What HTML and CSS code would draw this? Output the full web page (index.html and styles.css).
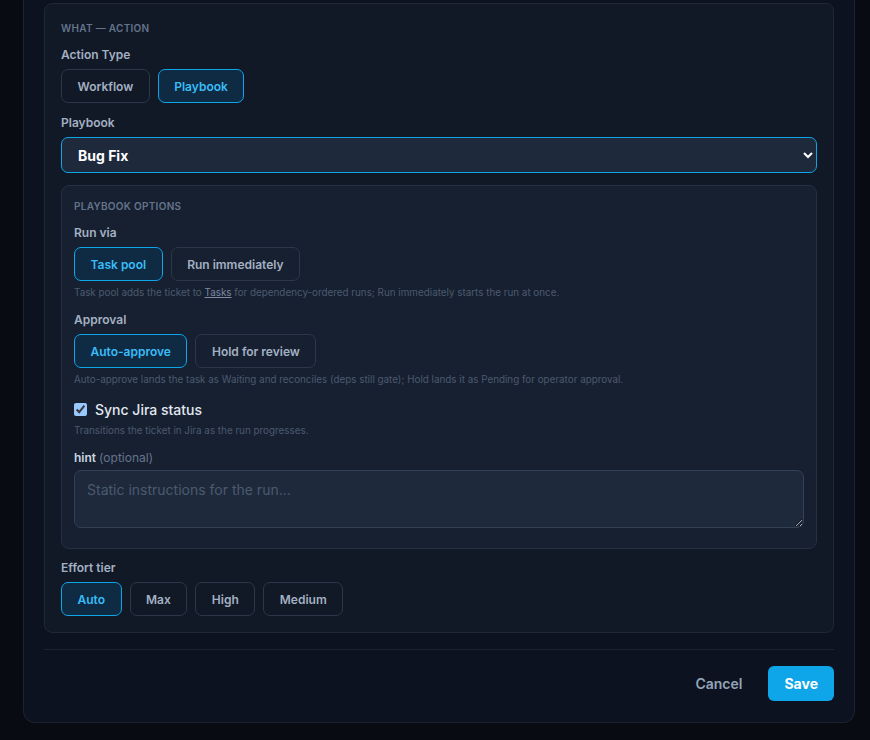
FILE: index.html
```html
<!DOCTYPE html>
<html lang="en">
<head>
    <meta charset="UTF-8">
    <meta name="viewport" content="width=device-width, initial-scale=1.0">
    <title>Edit Rule</title>
    <link rel="stylesheet" href="styles.css">
</head>
<body>
    <div class="modal">
        <div class="modal-body">
            <section class="section">
                <div class="section-title">What — Action</div>

                <div class="field">
                    <div class="field-label">Action Type</div>
                    <div class="seg">
                        <button class="seg-btn">Workflow</button>
                        <button class="seg-btn active">Playbook</button>
                    </div>
                </div>

                <div class="field">
                    <label class="field-label" for="playbook">Playbook</label>
                    <select id="playbook" class="select">
                        <option>Bug Fix</option>
                        <option>Feature</option>
                        <option>Refactor</option>
                    </select>
                </div>

                <div class="subsection">
                    <div class="section-title">Playbook options</div>

                    <div class="field">
                        <div class="field-label">Run via</div>
                        <div class="seg">
                            <button class="seg-btn active">Task pool</button>
                            <button class="seg-btn">Run immediately</button>
                        </div>
                        <p class="help">Task pool adds the ticket to <a href="#">Tasks</a> for dependency-ordered runs; Run immediately starts the run at once.</p>
                    </div>

                    <div class="field">
                        <div class="field-label">Approval</div>
                        <div class="seg">
                            <button class="seg-btn active">Auto-approve</button>
                            <button class="seg-btn">Hold for review</button>
                        </div>
                        <p class="help">Auto-approve lands the task as Waiting and reconciles (deps still gate); Hold lands it as Pending for operator approval.</p>
                    </div>

                    <div class="field">
                        <label class="check">
                            <input type="checkbox" checked>
                            <span>Sync Jira status</span>
                        </label>
                        <p class="help">Transitions the ticket in Jira as the run progresses.</p>
                    </div>

                    <div class="field">
                        <label class="field-label hint-label" for="hint">hint <span class="optional">(optional)</span></label>
                        <textarea id="hint" class="textarea" rows="2" placeholder="Static instructions for the run..."></textarea>
                    </div>
                </div>

                <div class="field">
                    <div class="field-label">Effort tier</div>
                    <div class="seg">
                        <button class="seg-btn active">Auto</button>
                        <button class="seg-btn">Max</button>
                        <button class="seg-btn">High</button>
                        <button class="seg-btn">Medium</button>
                    </div>
                </div>
            </section>
        </div>

        <div class="modal-footer">
            <button class="btn-ghost">Cancel</button>
            <button class="btn-primary">Save</button>
        </div>
    </div>
</body>
</html>
```

FILE: styles.css
```css
:root {
    color-scheme: dark;
}
body {
    margin: 0;
    background: #080b11;
    font-family: Inter, "Noto Sans", sans-serif;
    color: #cbd5e1;
}
button, select, textarea {
    font-family: inherit;
}

.modal {
    width: 832px;
    margin-left: 23px;
    box-sizing: border-box;
    background: #0d1220;
    border: 1px solid #1b2333;
    border-top: none;
    border-radius: 0 0 12px 12px;
}
.modal-body {
    padding: 3px 20px 0;
}

.section {
    background: #111826;
    border: 1px solid #1f2838;
    border-radius: 8px;
    padding: 17px 16px 16px;
}
.section-title {
    font-size: 10px;
    line-height: 14px;
    font-weight: 600;
    letter-spacing: 0.03em;
    text-transform: uppercase;
    color: #64748b;
    margin-bottom: 12px;
}

.field {
    margin-top: 12px;
}
.section-title + .field {
    margin-top: 0;
}
.subsection + .field {
    margin-top: 11px;
}
.field-label {
    display: block;
    font-size: 12px;
    line-height: 16px;
    font-weight: 600;
    color: #a3b0c2;
    margin-bottom: 6px;
}

.seg {
    display: flex;
    gap: 8px;
}
.seg-btn {
    height: 34px;
    padding: 0 15.5px;
    background: transparent;
    border: 1px solid #2c3749;
    border-radius: 7px;
    color: #a3b0c2;
    font-size: 12px;
    font-weight: 600;
    cursor: pointer;
}
.seg-btn.active {
    background: #0f2a43;
    border-color: #0ea5e9;
    color: #38bdf8;
}

.select {
    display: block;
    width: 100%;
    height: 36px;
    padding: 0 10px 0 12px;
    background: #1e293b;
    border: 1px solid #0ea5e9;
    border-radius: 7px;
    color: #fff;
    font-size: 14px;
    font-weight: 700;
}

.subsection {
    margin-top: 12px;
    background: #172031;
    border: 1px solid #253043;
    border-radius: 8px;
    padding: 13px 12px 20px;
}

.help {
    margin: 4px 0 0;
    font-size: 9.85px;
    line-height: 15px;
    color: #4b5a6f;
}
.help a {
    color: #7d8aa0;
}

.check {
    display: flex;
    align-items: center;
    gap: 8px;
    height: 20px;
    font-size: 14px;
    font-weight: 500;
    color: #e2e8f0;
}
.check input {
    width: 13px;
    height: 13px;
    margin: 0;
}

.hint-label {
    color: #cbd5e1;
    margin-bottom: 4px;
}
.optional {
    font-weight: 400;
    color: #64748b;
}
.textarea {
    display: block;
    width: 100%;
    height: 58px;
    box-sizing: border-box;
    padding: 9px 12px;
    background: #1e293b;
    border: 1px solid #334155;
    border-radius: 7px;
    color: #e2e8f0;
    font-size: 14px;
    line-height: 20px;
}
.textarea::placeholder {
    color: #4b5a6f;
}

.modal-footer {
    display: flex;
    justify-content: flex-end;
    align-items: center;
    gap: 8px;
    margin: 16px 20px 0;
    padding: 16px 0 21px;
    border-top: 1px solid #1c2434;
}
.btn-ghost {
    height: 35px;
    padding: 0 18px;
    background: transparent;
    border: none;
    color: #94a3b8;
    font-size: 14px;
    font-weight: 600;
    cursor: pointer;
}
.btn-primary {
    height: 35px;
    padding: 0 16px;
    background: #0ea5e9;
    border: none;
    border-radius: 6px;
    color: #fff;
    font-size: 14px;
    font-weight: 700;
    cursor: pointer;
}
```
